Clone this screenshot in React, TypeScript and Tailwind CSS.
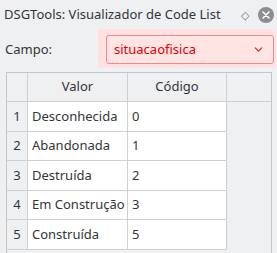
import { ChevronDown } from 'lucide-react';

const rows = [
  { n: 1, valor: 'Desconhecida', codigo: '0' },
  { n: 2, valor: 'Abandonada', codigo: '1' },
  { n: 3, valor: 'Destruída', codigo: '2' },
  { n: 4, valor: 'Em Construção', codigo: '3' },
  { n: 5, valor: 'Construída', codigo: '5' },
];

export default function App() {
  return (
    <div
      className="w-[277px] h-[253px] overflow-hidden bg-[#eff0f1] text-[13px] text-[#31363b]"
      style={{ fontFamily: '"Noto Sans", sans-serif' }}
    >
      {/* barra de título */}
      <div className="h-[29px] flex items-center pl-[4px] pr-[3px]">
        <span className="flex-1 whitespace-nowrap">DSGTools: Visualizador de Code List</span>
        <span className="text-[#6e7175] text-[11px] mr-[9px] leading-none">◇</span>
        <span className="w-[16px] h-[16px] rounded-full bg-[#8c8e90] flex items-center justify-center">
          <svg width="10" height="10" viewBox="0 0 10 10">
            <path d="M2 2 L8 8 M8 2 L2 8" stroke="white" strokeWidth="1.6" strokeLinecap="round" />
          </svg>
        </span>
      </div>

      {/* campo */}
      <div className="flex items-center h-[39px]">
        <span className="w-[98px] pl-[5px] pt-[2px]">Campo:</span>
        <div className="flex-1 h-full bg-[#ffe1e1] pl-[8px] pr-[2px] pt-[6px] pb-[4px] mr-[1px]">
          <div className="h-full rounded-[3px] border border-[#f08a8a] bg-[#ffe4e4] flex items-center pl-[7px] pr-[8px] text-[#e20000]">
            <span className="flex-1">situacaofisica</span>
            <ChevronDown className="w-[13px] h-[13px] text-[#d02020]" strokeWidth={2} />
          </div>
        </div>
      </div>

      {/* tabela */}
      <div className="mt-[4px] ml-[6px] w-[266px] h-[190px] border-l border-t border-r border-[#c3c5c7] bg-[#eff0f1]">
        <div className="grid grid-cols-[21px_100px_99px_1fr] h-[29px] border-b border-[#cdcfd1]">
          <div className="border-r border-[#cdcfd1]" />
          <div className="border-r border-[#cdcfd1] flex items-center justify-center">Valor</div>
          <div className="border-r border-[#cdcfd1] flex items-center justify-center">Código</div>
          <div />
        </div>
        {rows.map((r) => (
          <div key={r.n} className="grid grid-cols-[21px_100px_99px] h-[29.5px]">
            <div className="border-r border-b border-[#cdcfd1] flex items-center justify-center">{r.n}</div>
            <div className="bg-white border-r border-b border-[#cdcfd1] flex items-center pl-[4px] whitespace-nowrap">{r.valor}</div>
            <div className="bg-white border-r border-b border-[#cdcfd1] flex items-center pl-[4px]">{r.codigo}</div>
          </div>
        ))}
      </div>
    </div>
  );
}
